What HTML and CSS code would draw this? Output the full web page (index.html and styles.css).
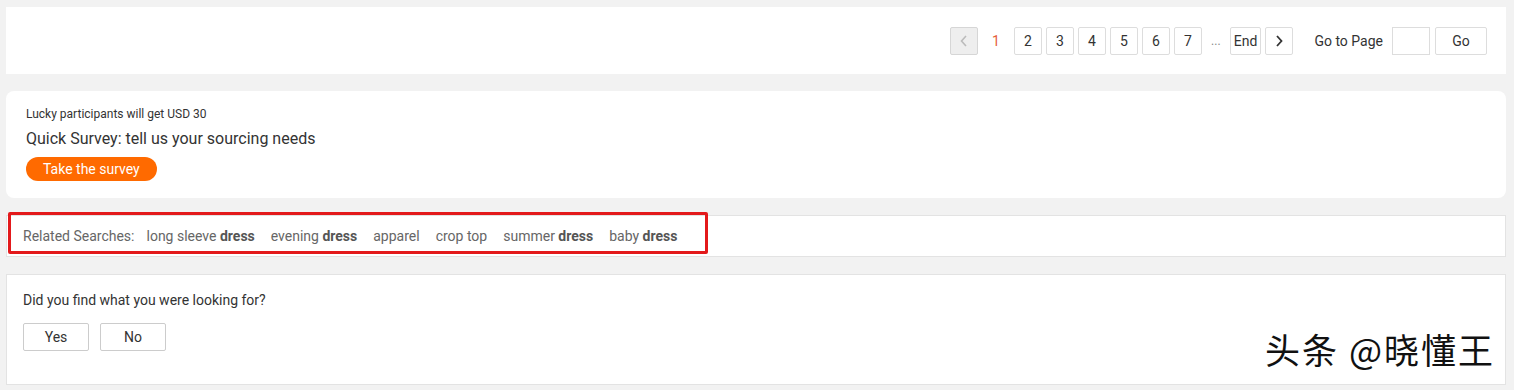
FILE: index.html
```html
<html>
    <head>
        <link rel="stylesheet" href="styles.css">
    </head>
    <body>
        <!--Pagination-->
        <div class="card pager_card">
            <div class="pager">
                <span class="page_btn page_prev">
                    <svg width="8" height="12" viewBox="0 0 8 12"><path d="M6 1 L1.5 6 L6 11" fill="none" stroke="#bbb" stroke-width="1.6"/></svg>
                </span>
                <span class="page_current">1</span>
                <span class="page_btn">2</span>
                <span class="page_btn">3</span>
                <span class="page_btn">4</span>
                <span class="page_btn">5</span>
                <span class="page_btn">6</span>
                <span class="page_btn">7</span>
                <span class="page_dots">...</span>
                <span class="page_btn page_end">End</span>
                <span class="page_btn">
                    <svg width="8" height="12" viewBox="0 0 8 12"><path d="M2 1 L6.5 6 L2 11" fill="none" stroke="#333" stroke-width="1.8"/></svg>
                </span>
                <span class="goto_label">Go to Page</span>
                <span class="goto_input"></span>
                <span class="page_btn goto_btn">Go</span>
            </div>
        </div>

        <!--Survey-->
        <div class="card survey_card">
            <p class="survey_small">Lucky participants will get USD 30</p>
            <p class="survey_title">Quick Survey: tell us your sourcing needs</p>
            <span class="survey_btn">Take the survey</span>
        </div>

        <!--Related searches-->
        <div class="card related_card">
            <div class="related_mark">
                <span class="related_label">Related Searches:</span>
                <span class="related_item">long sleeve <b>dress</b></span>
                <span class="related_item">evening <b>dress</b></span>
                <span class="related_item">apparel</span>
                <span class="related_item">crop top</span>
                <span class="related_item">summer <b>dress</b></span>
                <span class="related_item">baby <b>dress</b></span>
            </div>
        </div>

        <!--Feedback-->
        <div class="card feedback_card">
            <p class="feedback_text">Did you find what you were looking for?</p>
            <div class="feedback_buttons">
                <span class="feedback_btn">Yes</span>
                <span class="feedback_btn">No</span>
            </div>
            <div class="watermark">头条 @晓懂王</div>
        </div>
    </body>
</html>
```

FILE: styles.css
```css
html,body{
    border:0;
    margin:0;
    padding:0;
}

body{
    background: #f2f2f2;
    font-family: Roboto, "Liberation Sans", Arial, sans-serif;
    color: #333;
    padding: 7px 8px 0 6px;
    display: flex;
    flex-direction: column;
}

p{
    margin: 0;
}

.card{
    background: #fff;
}

.pager_card{
    height: 67px;
    display: flex;
    justify-content: flex-end;
    align-items: flex-start;
}

.pager{
    display: flex;
    align-items: center;
    margin-top: 20px;
    margin-right: 19px;
    font-size: 14px;
    color: #333;
}

.page_btn{
    box-sizing: border-box;
    height: 28px;
    min-width: 28px;
    border: 1px solid #ddd;
    border-radius: 2px;
    display: flex;
    align-items: center;
    justify-content: center;
    margin-left: 4px;
    background: #fff;
}

.page_prev{
    background: #eee;
    border-color: #d6d6d6;
    margin-left: 0;
}

.page_current{
    width: 28px;
    margin-left: 4px;
    text-align: center;
    color: #e5603a;
}

.page_dots{
    width: 20px;
    margin-left: 4px;
    text-align: center;
    color: #888;
    font-size: 12px;
}

.page_end{
    padding: 0 3px;
    margin-left: 4px;
}

.goto_label{
    margin-left: 21px;
    margin-right: 9px;
}

.goto_input{
    box-sizing: border-box;
    width: 38px;
    height: 28px;
    border: 1px solid #ddd;
}

.goto_btn{
    width: 52px;
    margin-left: 5px;
}

.survey_card{
    margin-top: 17px;
    height: 107px;
    border-radius: 8px;
    box-sizing: border-box;
    padding: 16px 20px 0 20px;
}

.survey_small{
    font-size: 12px;
    line-height: 14px;
    color: #333;
}

.survey_title{
    margin-top: 8px;
    font-size: 16px;
    line-height: 20px;
    color: #333;
}

.survey_btn{
    display: inline-block;
    margin-top: 8px;
    height: 24px;
    line-height: 24px;
    padding: 0 17px;
    border-radius: 12px;
    background: #ff6a00;
    color: #fff;
    font-size: 14px;
}

.related_card{
    margin-top: 17px;
    height: 42px;
    box-sizing: border-box;
    border: 1px solid #e3e3e3;
    position: relative;
}

/* red highlight drawn over the card */
.related_mark{
    position: absolute;
    left: 1px;
    top: -4px;
    width: 700px;
    height: 42px;
    box-sizing: border-box;
    border: 3px solid #e3191b;
    border-radius: 2px;
    display: flex;
    align-items: center;
    padding-left: 12px;
    padding-top: 6px;
    font-size: 14px;
    color: #666;
}

.related_label{
    margin-right: 12px;
}

.related_item{
    margin-right: 16px;
}

.related_item b{
    color: #555;
}

.feedback_card{
    margin-top: 17px;
    height: 111px;
    box-sizing: border-box;
    border: 1px solid #e3e3e3;
    padding: 16px 16px 0 16px;
    position: relative;
}

.feedback_text{
    font-size: 14px;
    line-height: 18px;
}

.feedback_buttons{
    display: flex;
    margin-top: 14px;
}

.feedback_btn{
    box-sizing: border-box;
    width: 66px;
    height: 28px;
    border: 1px solid #ccc;
    border-radius: 2px;
    display: flex;
    align-items: center;
    justify-content: center;
    font-size: 14px;
    margin-right: 11px;
}

.watermark{
    position: absolute;
    right: 10px;
    top: 52px;
    font-family: "Noto Sans CJK SC", sans-serif;
    font-size: 35px;
    letter-spacing: 2px;
    line-height: 44px;
    color: #111;
    text-shadow: 1px 1px 0 #fff, -1px -1px 0 #fff;
}
```
